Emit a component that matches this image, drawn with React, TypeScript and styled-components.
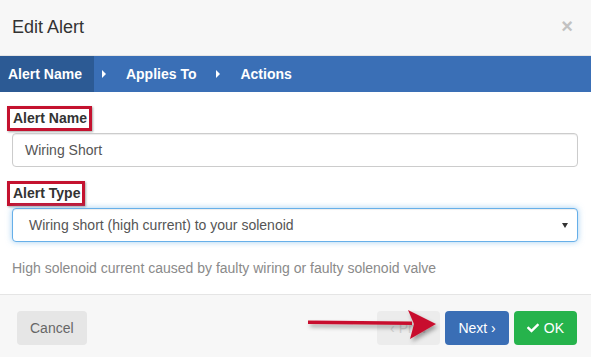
import React from 'react';
import styled, { createGlobalStyle } from 'styled-components';
import { FaCheck } from 'react-icons/fa';

const GlobalStyle = createGlobalStyle`
  html, body {
    margin: 0;
    padding: 0;
    background: #fff;
  }
  body {
    font-family: 'Liberation Sans', Arial, sans-serif;
    font-size: 14px;
    color: #333;
  }
`;

const Modal = styled.div`
  width: 591px;
  height: 357px;
  display: flex;
  flex-direction: column;
  overflow: hidden;
`;

const Header = styled.div`
  height: 55px;
  display: flex;
  align-items: center;
  justify-content: space-between;
  padding: 0 18px 0 12px;
  background: #f7f7f7;
  border-bottom: 1px solid #e5e5e5;
`;

const Title = styled.h4`
  margin: -1px 0 0;
  font-size: 18px;
  font-weight: normal;
  color: #333;
`;

const Close = styled.span`
  font-size: 20px;
  font-weight: bold;
  color: #c2c2c2;
  line-height: 1;
  margin-top: -4px;
`;

const StepBar = styled.div`
  height: 36px;
  display: flex;
  align-items: stretch;
  background: #3a6fb6;
`;

const Step = styled.div<{ $active?: boolean }>`
  display: flex;
  align-items: center;
  padding: 0 12px 0 8px;
  color: #fff;
  font-weight: bold;
  font-size: 14px;
  background: ${(p) => (p.$active ? '#2c5a94' : 'transparent')};
`;

const StepSep = styled.span`
  align-self: center;
  width: 0;
  height: 0;
  margin: 0 12px 0 8px;
  border-top: 4px solid transparent;
  border-bottom: 4px solid transparent;
  border-left: 4px solid #fff;
`;

const Body = styled.div`
  flex: 1;
  padding: 16px 13px 16px 12px;
  background: #fff;
`;

const FormGroup = styled.div`
  margin-bottom: 16px;
`;

const Label = styled.label`
  position: relative;
  display: inline-block;
  margin: 0 0 5px 1px;
  line-height: 20px;
  font-weight: bold;
  font-size: 14px;
  color: #333;

  &::after {
    content: '';
    position: absolute;
    top: -2px;
    right: -5px;
    bottom: -3px;
    left: -6px;
    border: 3px solid #c4122f;
    box-shadow: 1px 1px 2px rgba(0, 0, 0, 0.35);
  }
`;

const Field = styled.div<{ $focus?: boolean }>`
  position: relative;
  height: 34px;
  box-sizing: border-box;
  display: flex;
  align-items: center;
  padding: 0 12px;
  font-size: 14px;
  color: #555;
  background: #fff;
  border: 1px solid ${(p) => (p.$focus ? '#66afe9' : '#ccc')};
  border-radius: 4px;
  box-shadow: ${(p) =>
    p.$focus
      ? 'inset 0 1px 1px rgba(0,0,0,.075), 0 0 6px rgba(102,175,233,.6)'
      : 'inset 0 1px 1px rgba(0,0,0,.075)'};
`;

const SelectText = styled.span`
  padding-left: 4px;
`;

const Caret = styled.span`
  position: absolute;
  right: 9px;
  top: 14px;
  width: 0;
  height: 0;
  border-left: 3px solid transparent;
  border-right: 3px solid transparent;
  border-top: 5px solid #333;
`;

const Help = styled.p`
  margin: 0;
  line-height: 20px;
  font-size: 14px;
  color: #8a8a8a;
`;

const Footer = styled.div`
  position: relative;
  display: flex;
  align-items: center;
  padding: 16px 14px 12px 17px;
  background: #f7f7f7;
  border-top: 1px solid #e5e5e5;
`;

const Spacer = styled.div`
  flex: 1;
`;

const Btn = styled.button<{ $variant: 'default' | 'muted' | 'primary' | 'success' }>`
  height: 34px;
  min-width: 63px;
  padding: 0 12px;
  margin-left: 5px;
  display: inline-flex;
  align-items: center;
  justify-content: center;
  gap: 5px;
  font-family: inherit;
  font-size: 14px;
  border: 1px solid transparent;
  border-radius: 4px;
  cursor: pointer;
  color: ${(p) =>
    p.$variant === 'default' ? '#666' : p.$variant === 'muted' ? '#cfcfcf' : '#fff'};
  background: ${(p) =>
    ({
      default: '#e6e6e6',
      muted: '#ececec',
      primary: '#3a6eb5',
      success: '#26b34c',
    })[p.$variant]};

  &:first-child {
    margin-left: 0;
  }
`;

const Pointer = styled.svg`
  position: absolute;
  left: 300px;
  top: 5px;
  pointer-events: none;
`;

export default function App() {
  return (
    <>
      <GlobalStyle />
      <Modal>
        <Header>
          <Title>Edit Alert</Title>
          <Close>×</Close>
        </Header>
        <StepBar>
          <Step $active>Alert Name</Step>
          <StepSep />
          <Step>Applies To</Step>
          <StepSep />
          <Step>Actions</Step>
        </StepBar>
        <Body>
          <FormGroup>
            <Label>Alert Name</Label>
            <Field>Wiring Short</Field>
          </FormGroup>
          <FormGroup>
            <Label>Alert Type</Label>
            <Field $focus>
              <SelectText>Wiring short (high current) to your solenoid</SelectText>
              <Caret />
            </Field>
          </FormGroup>
          <Help>High solenoid current caused by faulty wiring or faulty solenoid valve</Help>
        </Body>
        <Footer>
          <Btn $variant="default">Cancel</Btn>
          <Spacer />
          <Btn $variant="muted">‹ Prev</Btn>
          <Btn $variant="primary">Next ›</Btn>
          <Btn $variant="success">
            <FaCheck size={12} />
            OK
          </Btn>
          <Pointer width="145" height="50" viewBox="0 0 145 50">
            <defs>
              <filter id="sh" x="-10%" y="-30%" width="130%" height="180%">
                <feDropShadow dx="2" dy="3" stdDeviation="2" floodColor="#000" floodOpacity="0.35" />
              </filter>
            </defs>
            <g filter="url(#sh)" fill="#c8102e">
              <polygon points="8,20.5 112,21.5 112,25 8,24" />
              <polygon points="108,10 136,24 110,39 114,24" />
            </g>
          </Pointer>
        </Footer>
      </Modal>
    </>
  );
}
